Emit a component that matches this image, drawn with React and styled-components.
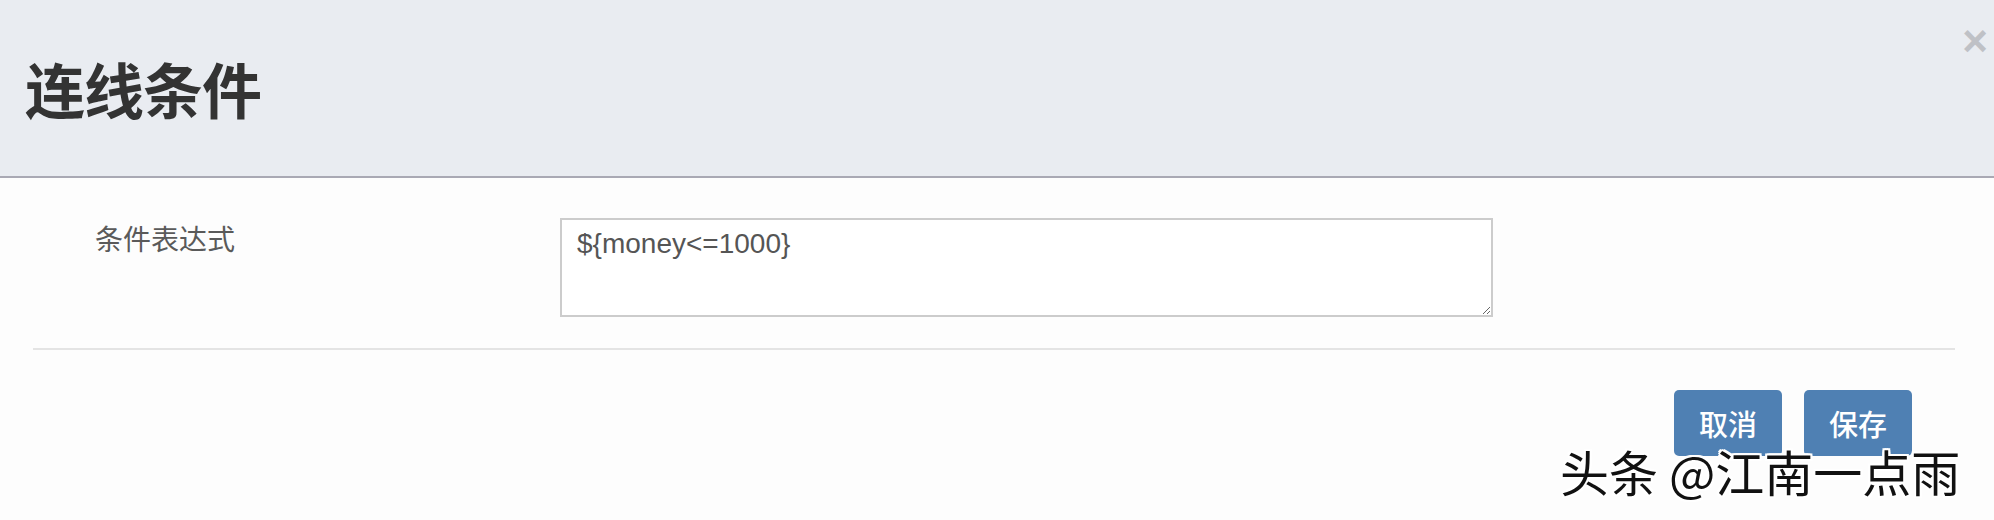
import React from "react";
import styled, { createGlobalStyle } from "styled-components";

const Global = createGlobalStyle`
  html, body { margin: 0; padding: 0; background: #fdfdfd; overflow: hidden; }
  body { font-family: "Noto Sans CJK SC", "Noto Sans", sans-serif; }
  * { box-sizing: border-box; }
`;

const Modal = styled.div`
  position: relative;
  width: 1994px;
  height: 520px;
  display: flex;
  flex-direction: column;
  background: #fdfdfd;
`;

const Header = styled.div`
  height: 178px;
  background: #e9ecf1;
  border-bottom: 2px solid #a9a9b4;
  display: flex;
  align-items: center;
  padding: 0 0 0 25px;
  position: relative;
`;

const Title = styled.h4`
  margin: 0;
  font-family: "Noto Sans CJK SC", sans-serif;
  font-size: 60px;
  font-weight: 700;
  color: #333333;
  line-height: 1;
  letter-spacing: -1px;
`;

const Close = styled.button`
  position: absolute;
  top: 19px;
  right: 6px;
  border: 0;
  background: transparent;
  padding: 0;
  font-family: "Liberation Sans", sans-serif;
  font-size: 44px;
  font-weight: 700;
  line-height: 1;
  color: #bfc1c6;
  cursor: pointer;
`;

const Body = styled.div`
  display: flex;
  flex-direction: column;
`;

const FormRow = styled.div`
  display: flex;
  align-items: flex-start;
  padding: 40px 0 0 95px;
`;

const Label = styled.label`
  width: 465px;
  font-family: "Noto Sans CJK SC", sans-serif;
  font-size: 28px;
  line-height: 40px;
  color: #5a5a5a;
`;

const TextArea = styled.textarea`
  width: 933px;
  height: 99px;
  border: 2px solid #cccccc;
  border-radius: 0;
  padding: 6px 15px;
  font-family: "Liberation Sans", Arial, sans-serif;
  font-size: 28px;
  line-height: 36px;
  color: #555555;
  background: #fff;
  outline: none;
`;

const Divider = styled.hr`
  margin: 31px 39px 0 33px;
  border: 0;
  border-top: 2px solid #e4e4e4;
  height: 0;
`;

const Footer = styled.div`
  display: flex;
  justify-content: flex-end;
  gap: 22px;
  padding: 40px 82px 0 0;
`;

const Button = styled.button`
  width: 108px;
  height: 66px;
  border: 0;
  border-radius: 5px;
  background: #4f80b3;
  color: #ffffff;
  font-family: "Noto Sans CJK SC", sans-serif;
  font-size: 29px;
  font-weight: 500;
  line-height: 1;
  padding: 0;
  cursor: pointer;
`;

const Watermark = styled.div`
  position: absolute;
  left: 1560px;
  top: 444px;
  font-family: "Noto Sans CJK SC", sans-serif;
  font-size: 49px;
  line-height: 1.1;
  color: #111;
  white-space: nowrap;
  text-shadow: 2px 2px 0 #fff, -2px -2px 0 #fff, 2px -2px 0 #fff, -2px 2px 0 #fff,
    0 2px 0 #fff, 2px 0 0 #fff, 0 -2px 0 #fff, -2px 0 0 #fff;
  pointer-events: none;
`;

export default function App() {
  return (
    <>
      <Global />
      <Modal>
        <Header>
          <Title>连线条件</Title>
          <Close aria-label="close">×</Close>
        </Header>
        <Body>
          <FormRow>
            <Label>条件表达式</Label>
            <TextArea defaultValue="${money<=1000}" />
          </FormRow>
          <Divider />
          <Footer>
            <Button>取消</Button>
            <Button>保存</Button>
          </Footer>
        </Body>
        <Watermark>头条 @江南一点雨</Watermark>
      </Modal>
    </>
  );
}
